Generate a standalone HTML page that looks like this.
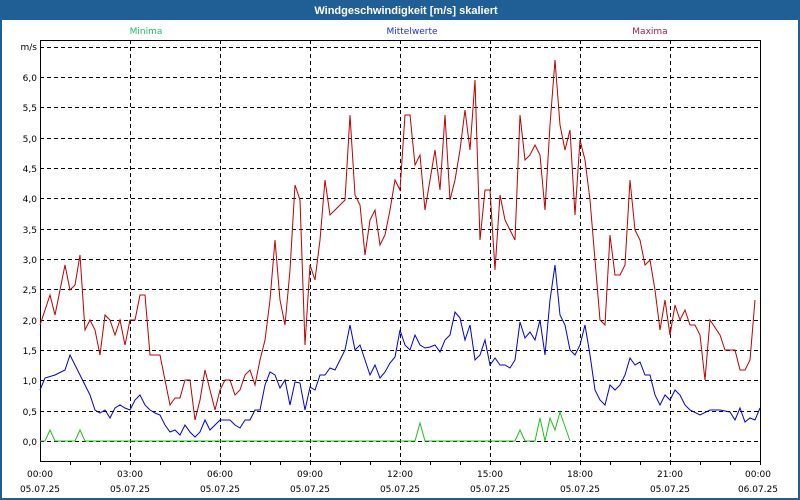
<!DOCTYPE html>
<html><head><meta charset="utf-8"><style>
html,body{margin:0;padding:0;background:#fff;}
body{width:800px;height:500px;overflow:hidden;position:relative;font-family:"DejaVu Sans","Liberation Sans",sans-serif;}
</style></head><body>
<svg width="800" height="500" xmlns="http://www.w3.org/2000/svg" style="position:absolute;left:0;top:0">
<rect x="0" y="0" width="800" height="500" fill="#1f5f96"/>
<rect x="2" y="20" width="796" height="478" fill="#fff"/>
<text x="406" y="14" text-anchor="middle" fill="#fff" font-size="11" font-weight="bold" font-family="Liberation Sans,sans-serif">Windgeschwindigkeit [m/s] skaliert</text>
<g font-size="9" font-family="DejaVu Sans,Liberation Sans,sans-serif">
<text x="146" y="34" text-anchor="middle" fill="#20c060">Minima</text>
<text x="412" y="34" text-anchor="middle" fill="#2030e0">Mittelwerte</text>
<text x="650" y="34" text-anchor="middle" fill="#a02050">Maxima</text>
</g>
<g stroke="#000" stroke-width="1" stroke-dasharray="4,3" fill="none">
<path d="M40 47.5H760M40 77.5H760M40 107.5H760M40 138.5H760M40 168.5H760M40 198.5H760M40 229.5H760M40 259.5H760M40 289.5H760M40 320.5H760M40 350.5H760M40 380.5H760M40 411.5H760"/>
<path d="M130.5 40V461M220.5 40V461M310.5 40V461M400.5 40V461M490.5 40V461M580.5 40V461M670.5 40V461"/>
</g>
<path d="M40 441.5H760" stroke="#000" stroke-dasharray="4,3"/>
<rect x="40.5" y="40.5" width="720" height="421" fill="none" stroke="#000"/>
<g stroke="#000"><path d="M70.5 461v4M100.5 461v4M130.5 461v4M160.5 461v4M190.5 461v4M220.5 461v4M250.5 461v4M280.5 461v4M310.5 461v4M340.5 461v4M370.5 461v4M400.5 461v4M430.5 461v4M460.5 461v4M490.5 461v4M520.5 461v4M550.5 461v4M580.5 461v4M610.5 461v4M640.5 461v4M670.5 461v4M700.5 461v4M730.5 461v4M760.5 461v4"/></g>
<g font-size="9" font-family="DejaVu Sans,Liberation Sans,sans-serif" fill="#000" text-anchor="end">
<text x="37" y="50">m/s</text>
<text x="37" y="81">6,0</text><text x="37" y="111">5,5</text><text x="37" y="142">5,0</text><text x="37" y="172">4,5</text><text x="37" y="202">4,0</text><text x="37" y="233">3,5</text><text x="37" y="263">3,0</text><text x="37" y="293">2,5</text><text x="37" y="324">2,0</text><text x="37" y="354">1,5</text><text x="37" y="384">1,0</text><text x="37" y="415">0,5</text><text x="37" y="445">0,0</text>
</g>
<g font-size="9" font-family="DejaVu Sans,Liberation Sans,sans-serif" fill="#000" text-anchor="middle">
<text x="40" y="477">00:00</text><text x="40" y="492">05.07.25</text>
<text x="130" y="477">03:00</text><text x="130" y="492">05.07.25</text>
<text x="220" y="477">06:00</text><text x="220" y="492">05.07.25</text>
<text x="310" y="477">09:00</text><text x="310" y="492">05.07.25</text>
<text x="400" y="477">12:00</text><text x="400" y="492">05.07.25</text>
<text x="490" y="477">15:00</text><text x="490" y="492">05.07.25</text>
<text x="580" y="477">18:00</text><text x="580" y="492">05.07.25</text>
<text x="670" y="477">21:00</text><text x="670" y="492">05.07.25</text>
<text x="758" y="477">00:00</text><text x="758" y="492">06.07.25</text>
</g>
<polyline fill="none" stroke="#20c020" stroke-width="1" points="40,441 45,441 50,430 55,441 75,441 80,430 85,441 415,441 420,423 425,441 515,441 520,430 525,441 535,441 540,418 545,441 550,418 555,430 560,412 570,441"/>
<polyline fill="none" stroke="#c00000" stroke-width="1" points="40,325 50,295 55,315 65,265 70,290 75,285 80,255 85,330 90,320 95,330 100,355 105,315 110,320 115,335 120,320 125,345 130,320 135,320 140,295 145,295 150,355 160,355 165,380 170,405 175,398 180,398 185,380 190,380 195,420 200,400 205,370 210,390 215,410 220,390 225,380 230,380 235,395 240,390 245,375 250,370 255,385 260,360 265,340 270,300 275,240 280,300 285,325 290,270 295,185 300,200 305,345 310,265 315,280 320,240 325,180 330,215 335,210 340,205 345,200 350,115 355,195 360,205 365,255 370,220 375,210 380,245 385,235 390,210 395,180 400,190 405,115 410,115 415,165 420,155 425,210 430,180 435,150 440,190 445,115 450,200 455,180 460,150 465,110 470,150 475,80 480,240 485,190 490,190 495,270 500,195 505,220 510,230 515,240 520,115 525,160 530,155 535,145 540,155 545,210 550,125 555,60 560,125 565,150 570,130 575,215 580,140 585,160 590,200 595,260 600,320 605,325 610,235 615,275 620,275 625,265 630,180 635,230 640,240 645,265 650,260 655,290 660,330 665,300 670,335 675,305 680,320 685,310 690,325 695,325 700,335 705,380 710,320 720,335 725,350 735,350 740,370 745,370 750,360 755,300"/>
<polyline fill="none" stroke="#0000e0" stroke-width="1" points="40,390 45,378 55,375 65,370 70,355 75,365 80,375 85,385 90,395 95,410 100,413 105,410 110,418 115,408 120,405 125,408 130,410 135,400 140,395 145,405 150,410 155,413 160,415 165,425 170,432 175,430 180,435 185,425 190,432 195,437 200,432 205,420 210,430 215,425 220,420 225,420 230,420 235,425 240,428 245,420 250,420 255,410 260,410 265,385 270,372 275,375 280,388 285,380 290,405 295,382 300,383 305,410 310,387 315,390 320,375 325,375 330,368 335,370 340,360 345,350 350,325 355,350 360,345 365,360 370,375 375,365 380,378 385,372 390,363 395,357 400,330 405,345 410,350 415,335 420,345 425,348 430,347 435,345 440,352 445,340 450,335 455,312 460,318 465,340 470,325 475,360 480,355 485,340 490,365 495,358 500,365 505,365 510,368 515,360 520,322 525,338 530,332 535,340 540,320 545,355 550,300 555,265 560,315 565,325 570,350 575,355 580,345 585,325 590,355 595,390 600,400 605,405 610,385 615,390 620,385 625,375 630,358 635,365 640,362 645,375 650,375 655,395 660,405 665,395 670,400 675,390 680,395 685,405 690,410 700,415 710,410 720,410 730,412 735,420 740,408 745,422 750,418 755,420 760,408"/>
</svg>
</body></html>
